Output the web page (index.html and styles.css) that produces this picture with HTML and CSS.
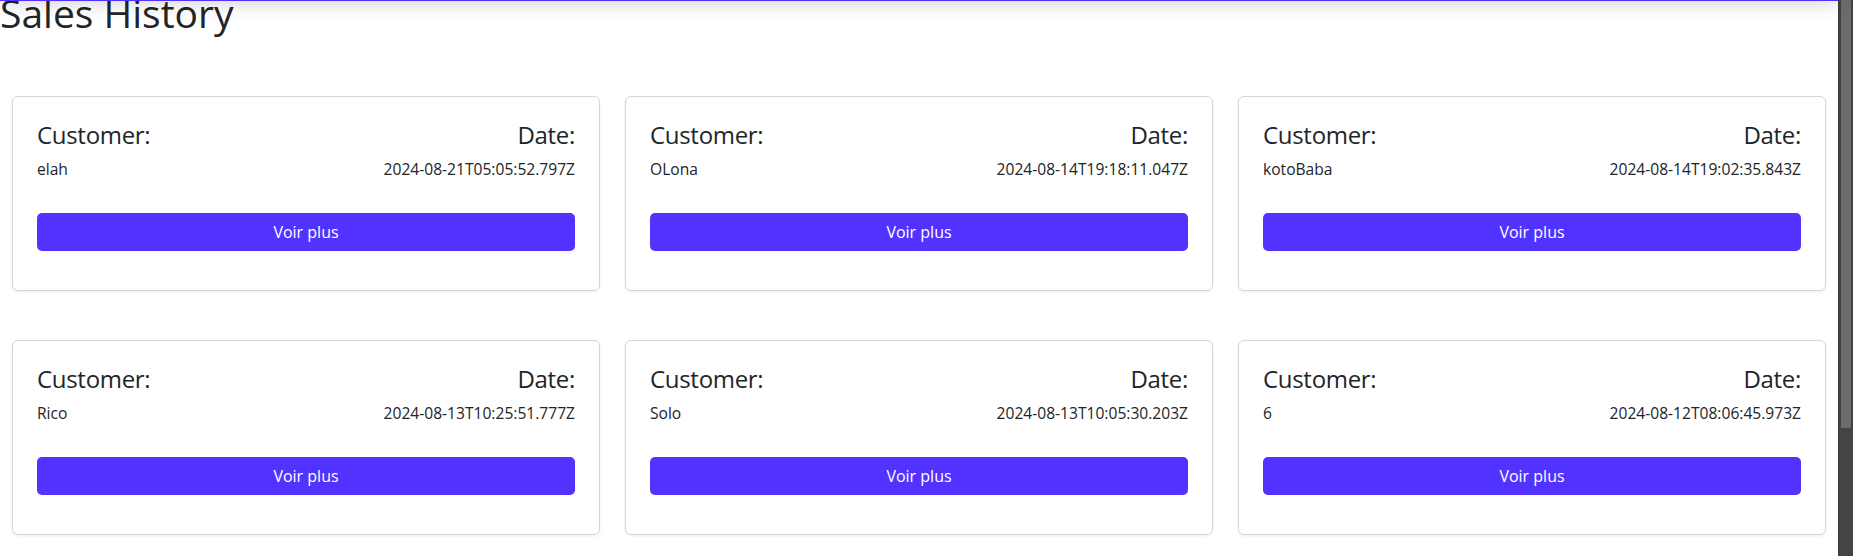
FILE: index.html
```html
<!DOCTYPE html>
<html lang="en">
<head>
<meta charset="utf-8">
<title>Sales History</title>
<link rel="stylesheet" href="styles.css">
</head>
<body>
<header class="navbar"></header>
<main class="page">
  <h1 class="title">Sales History</h1>
  <section class="grid">
    <article class="card">
      <div class="card-head"><h3>Customer:</h3><h3>Date:</h3></div>
      <div class="card-vals"><span>elah</span><span>2024-08-21T05:05:52.797Z</span></div>
      <button class="btn">Voir plus</button>
    </article>
    <article class="card">
      <div class="card-head"><h3>Customer:</h3><h3>Date:</h3></div>
      <div class="card-vals"><span>OLona</span><span>2024-08-14T19:18:11.047Z</span></div>
      <button class="btn">Voir plus</button>
    </article>
    <article class="card">
      <div class="card-head"><h3>Customer:</h3><h3>Date:</h3></div>
      <div class="card-vals"><span>kotoBaba</span><span>2024-08-14T19:02:35.843Z</span></div>
      <button class="btn">Voir plus</button>
    </article>
    <article class="card">
      <div class="card-head"><h3>Customer:</h3><h3>Date:</h3></div>
      <div class="card-vals"><span>Rico</span><span>2024-08-13T10:25:51.777Z</span></div>
      <button class="btn">Voir plus</button>
    </article>
    <article class="card">
      <div class="card-head"><h3>Customer:</h3><h3>Date:</h3></div>
      <div class="card-vals"><span>Solo</span><span>2024-08-13T10:05:30.203Z</span></div>
      <button class="btn">Voir plus</button>
    </article>
    <article class="card">
      <div class="card-head"><h3>Customer:</h3><h3>Date:</h3></div>
      <div class="card-vals"><span>6</span><span>2024-08-12T08:06:45.973Z</span></div>
      <button class="btn">Voir plus</button>
    </article>
  </section>
</main>
<div class="scrollbar"><div class="thumb"></div></div>
</body>
</html>
```
FILE: styles.css
```css
* { box-sizing: border-box; }
html, body { margin: 0; padding: 0; }
body {
  height: 556px;
  overflow: hidden;
  display: flex;
  background: #fff;
  color: #212529;
  font-family: "Open Sans", "Noto Sans", sans-serif;
}
.navbar {
  position: fixed;
  top: -60px;
  left: 0;
  right: 15px;
  height: 61px;
  background: #fff;
  border-bottom: 1px solid #5232ff;
  box-shadow: 0 2px 18px rgba(0, 0, 0, 0.18);
  z-index: 10;
}
.page {
  flex: 1;
  min-width: 0;
}
.title {
  margin: -9px 0 0 0;
  font-size: 39px;
  line-height: 43px;
  font-weight: 400;
}
.grid {
  margin: 62px 12px 0 12px;
  display: grid;
  grid-template-columns: repeat(3, 1fr);
  column-gap: 25px;
  row-gap: 49px;
}
.card {
  border: 1px solid #d5d5d5;
  border-radius: 6px;
  box-shadow: 0 1px 3px rgba(0, 0, 0, 0.08);
  padding: 24px;
  display: flex;
  flex-direction: column;
}
.card-head, .card-vals {
  display: flex;
  justify-content: space-between;
}
.card-head h3 {
  margin: 0;
  font-size: 24px;
  line-height: 28px;
  font-weight: 400;
  letter-spacing: -0.3px;
}
.card-vals {
  margin-top: 8px;
  font-size: 15.6px;
  line-height: 24px;
}
.btn {
  margin: 32px 0 15px 0;
  height: 38px;
  border: none;
  border-radius: 5px;
  background: #5232ff;
  color: #fff;
  font-family: inherit;
  font-size: 16px;
  font-weight: 400;
}
.scrollbar {
  width: 15px;
  flex: none;
  height: 556px;
  background: #444;
  border-left: 1px solid #3a3a3a;
  padding: 0 2px 0 2px;
}
.thumb {
  height: 428px;
  background: #6b6b6b;
}
```
